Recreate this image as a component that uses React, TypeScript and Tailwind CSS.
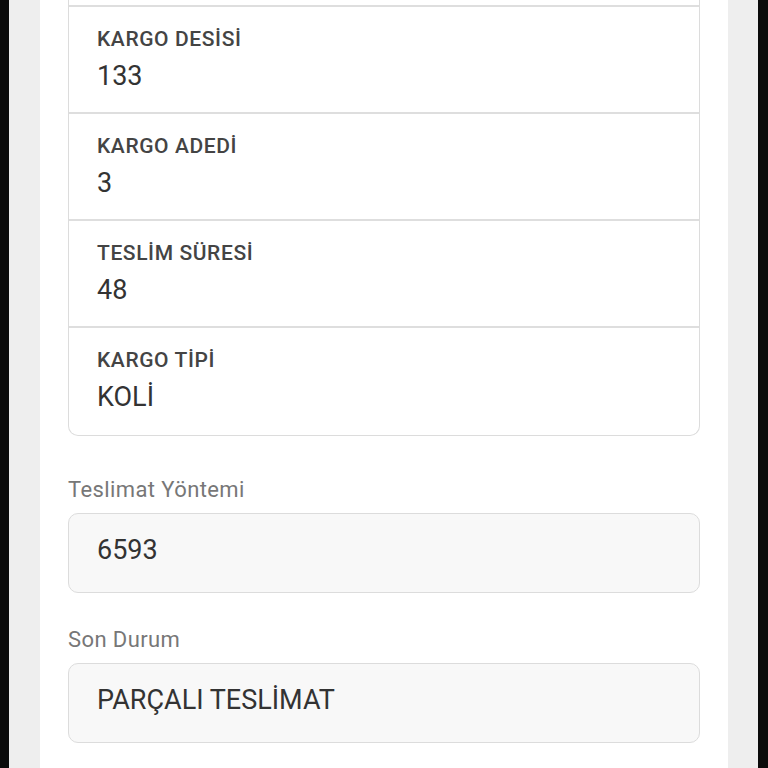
import React from "react";

const rows = [
  { label: "KARGO DESİSİ", value: "133" },
  { label: "KARGO ADEDİ", value: "3" },
  { label: "TESLİM SÜRESİ", value: "48" },
  { label: "KARGO TİPİ", value: "KOLİ" },
];

const fields = [
  { label: "Teslimat Yöntemi", value: "6593", gap: "mt-[40px]" },
  { label: "Son Durum", value: "PARÇALI TESLİMAT", gap: "mt-[33px]" },
];

export default function App() {
  return (
    <div className="flex h-[768px] w-[768px] overflow-hidden bg-white font-['Roboto',sans-serif]">
      <div className="w-[9px] shrink-0 bg-[#0b0b0b]" />
      <div className="w-[31px] shrink-0 bg-[#eeeeee]" />

      <div className="flex-1 overflow-hidden px-[28px]">
        {/* detail card; its top is scrolled above the screen */}
        <div className="rounded-b-[10px] border border-t-0 border-[#dcdcdc] pb-[2px]">
          <div className="h-[5px]" />
          {rows.map((r) => (
            <div key={r.label} className="h-[107px] border-t-2 border-[#dedede] px-[28px] pt-[18px]">
              <p className="text-[21px] leading-[28px] font-medium tracking-[0.6px] text-[#444]">
                {r.label}
              </p>
              <p className="mt-[7px] text-[27px] leading-[32px] text-[#333]">{r.value}</p>
            </div>
          ))}
        </div>

        {fields.map((f) => (
          <div key={f.label} className={f.gap}>
            <p className="text-[22px] leading-[28px] tracking-[0.4px] text-[#777]">{f.label}</p>
            <div className="mt-[9px] h-[80px] rounded-[10px] border border-[#dcdcdc] bg-[#f8f8f8] px-[28px] pt-[20px]">
              <p className="text-[27px] leading-[32px] text-[#333]">{f.value}</p>
            </div>
          </div>
        ))}
      </div>

      <div className="w-[30px] shrink-0 bg-[#eeeeee]" />
      <div className="w-[10px] shrink-0 bg-[#0b0b0b]" />
    </div>
  );
}
